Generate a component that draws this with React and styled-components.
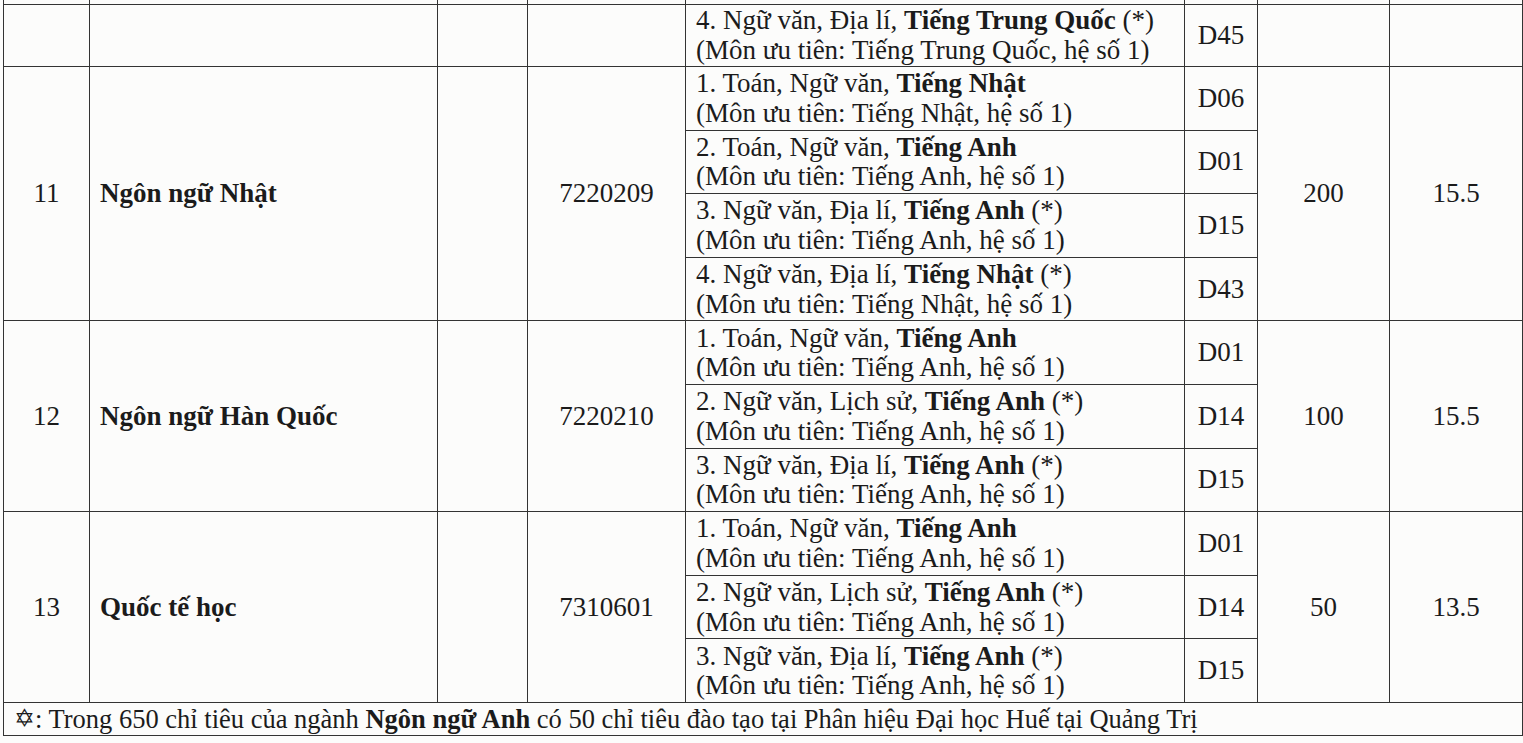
import React from "react";
import styled, { createGlobalStyle } from "styled-components";

const GlobalStyle = createGlobalStyle`
  html, body { margin: 0; padding: 0; background: #fcfcfb; }
  #root { width: 1523px; overflow: hidden; }
`;

const Page = styled.div`
  padding: 0 1px 0 3px;
`;

const Table = styled.table`
  border-collapse: collapse;
  table-layout: fixed;
  width: 1519px;
  font-family: "Liberation Serif", "Times New Roman", serif;
  font-size: 27px;
  color: #1b1b1b;
`;

const Row = styled.tr`
  height: ${(p) => p.$h}px;
`;

const Cell = styled.td`
  border: 1px solid #333;
  padding: 0 10px;
  vertical-align: middle;
  text-align: ${(p) => p.$align || "center"};
  font-weight: ${(p) => (p.$bold ? 700 : 400)};
  line-height: 29px;
  white-space: nowrap;
  overflow: hidden;
`;

const CutCell = styled.td`
  border-left: 1px solid #333;
  border-right: 1px solid #333;
  border-bottom: 1px solid #333;
  border-top: none;
  padding: 0;
`;

const SubjectCell = styled(Cell)`
  text-align: left;
  padding: 1px 10px 0;
  line-height: 29.5px;
`;

const Strong = styled.b`
  font-weight: 700;
`;

const NoteCell = styled(Cell)`
  text-align: left;
  padding: 0 10px;
  font-size: 26.5px;
  line-height: 30px;
`;

const Star = styled.span`
  font-family: "DejaVu Sans", sans-serif;
  font-size: 25px;
  vertical-align: 1px;
`;

const widths = [86, 348, 90, 158, 499, 73, 132, 133];

const groups = [
  {
    stt: "11",
    name: "Ngôn ngữ Nhật",
    code: "7220209",
    quota: "200",
    score: "15.5",
    combos: [
      { pre: "1. Toán, Ngữ văn, ", lang: "Tiếng Nhật", star: false, pri: "Tiếng Nhật", code: "D06" },
      { pre: "2. Toán, Ngữ văn, ", lang: "Tiếng Anh", star: false, pri: "Tiếng Anh", code: "D01" },
      { pre: "3. Ngữ văn, Địa lí, ", lang: "Tiếng Anh", star: true, pri: "Tiếng Anh", code: "D15" },
      { pre: "4. Ngữ văn, Địa lí, ", lang: "Tiếng Nhật", star: true, pri: "Tiếng Nhật", code: "D43" },
    ],
  },
  {
    stt: "12",
    name: "Ngôn ngữ Hàn Quốc",
    code: "7220210",
    quota: "100",
    score: "15.5",
    combos: [
      { pre: "1. Toán, Ngữ văn, ", lang: "Tiếng Anh", star: false, pri: "Tiếng Anh", code: "D01" },
      { pre: "2. Ngữ văn, Lịch sử, ", lang: "Tiếng Anh", star: true, pri: "Tiếng Anh", code: "D14" },
      { pre: "3. Ngữ văn, Địa lí, ", lang: "Tiếng Anh", star: true, pri: "Tiếng Anh", code: "D15" },
    ],
  },
  {
    stt: "13",
    name: "Quốc tế học",
    code: "7310601",
    quota: "50",
    score: "13.5",
    combos: [
      { pre: "1. Toán, Ngữ văn, ", lang: "Tiếng Anh", star: false, pri: "Tiếng Anh", code: "D01" },
      { pre: "2. Ngữ văn, Lịch sử, ", lang: "Tiếng Anh", star: true, pri: "Tiếng Anh", code: "D14" },
      { pre: "3. Ngữ văn, Địa lí, ", lang: "Tiếng Anh", star: true, pri: "Tiếng Anh", code: "D15" },
    ],
  },
];

function Subject({ c }) {
  return (
    <SubjectCell>
      {c.pre}
      <Strong>{c.lang}</Strong>
      {c.star ? " (*)" : ""}
      <br />
      (Môn ưu tiên: {c.pri}, hệ số 1)
    </SubjectCell>
  );
}

export default function App() {
  return (
    <>
      <GlobalStyle />
      <Page>
        <Table>
          <colgroup>
            {widths.map((w, i) => (
              <col key={i} style={{ width: w }} />
            ))}
          </colgroup>
          <tbody>
            <Row $h={4}>
              {widths.map((w, i) => (
                <CutCell key={i} />
              ))}
            </Row>
            <Row $h={62.5}>
              <Cell />
              <Cell />
              <Cell />
              <Cell />
              <Subject
                c={{
                  pre: "4. Ngữ văn, Địa lí, ",
                  lang: "Tiếng Trung Quốc",
                  star: true,
                  pri: "Tiếng Trung Quốc",
                }}
              />
              <Cell>D45</Cell>
              <Cell />
              <Cell />
            </Row>
            {groups.map((g) =>
              g.combos.map((c, i) => (
                <Row $h={63.6} key={g.stt + i}>
                  {i === 0 && (
                    <>
                      <Cell rowSpan={g.combos.length}>{g.stt}</Cell>
                      <Cell rowSpan={g.combos.length} $align="left" $bold>
                        {g.name}
                      </Cell>
                      <Cell rowSpan={g.combos.length} />
                      <Cell rowSpan={g.combos.length}>{g.code}</Cell>
                    </>
                  )}
                  <Subject c={c} />
                  <Cell>{c.code}</Cell>
                  {i === 0 && (
                    <>
                      <Cell rowSpan={g.combos.length}>{g.quota}</Cell>
                      <Cell rowSpan={g.combos.length}>{g.score}</Cell>
                    </>
                  )}
                </Row>
              ))
            )}
            <Row $h={33}>
              <NoteCell colSpan={8}>
                <Star>✡</Star>: Trong 650 chỉ tiêu của ngành <Strong>Ngôn ngữ Anh</Strong> có 50 chỉ tiêu đào tạo tại Phân hiệu Đại học Huế tại Quảng Trị
              </NoteCell>
            </Row>
          </tbody>
        </Table>
      </Page>
    </>
  );
}
